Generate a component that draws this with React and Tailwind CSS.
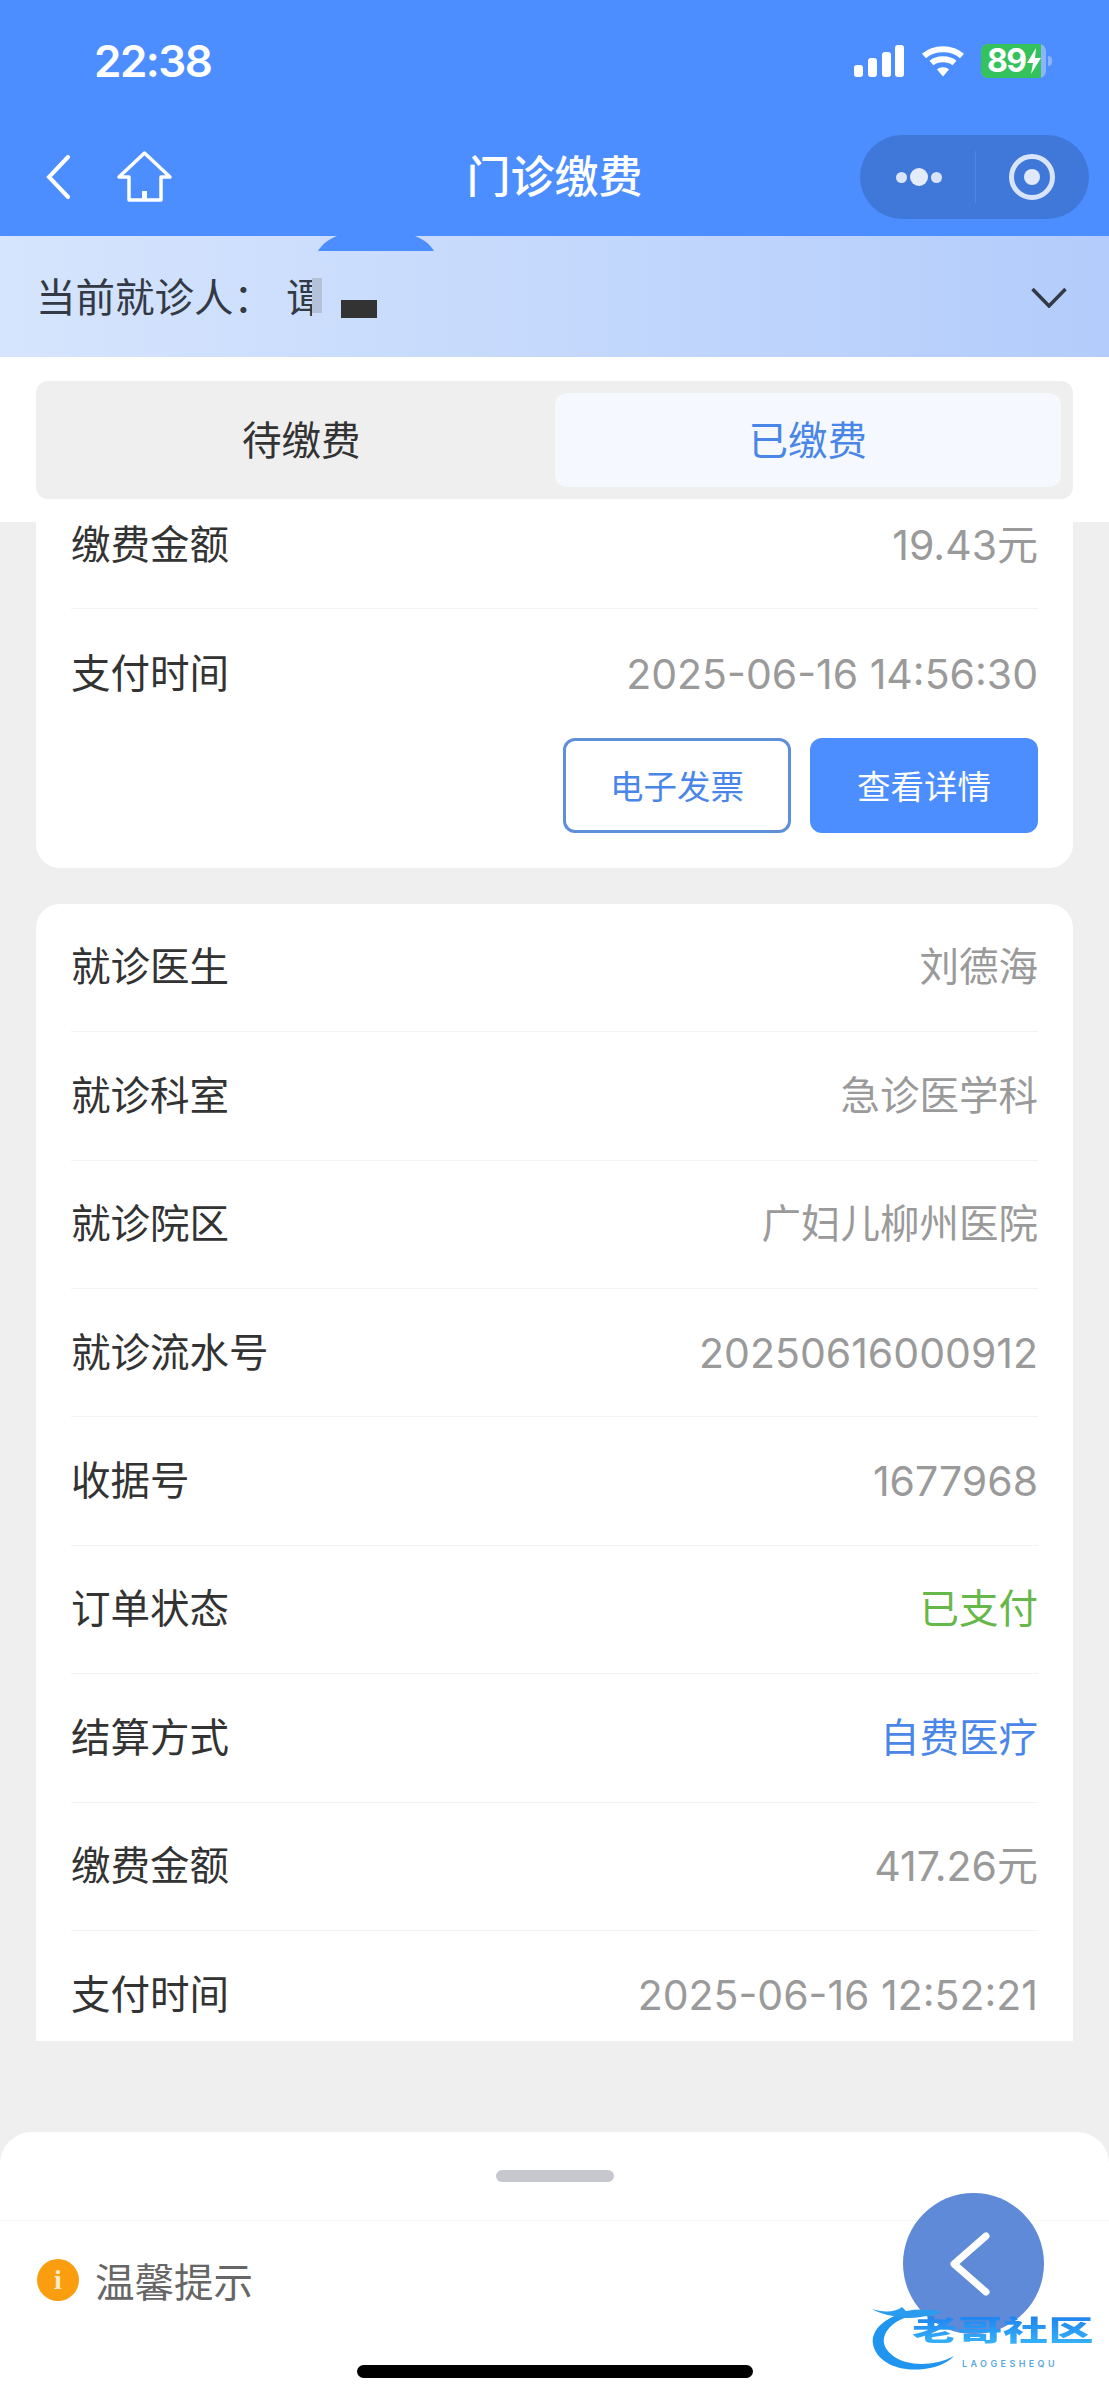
const CJK = '"Noto Sans CJK SC", sans-serif';
const MIX = 'Inter, "Noto Sans CJK SC", sans-serif';

function Row({ label, value, tone = "text-[#9a9a9a] text-[39.5px]", line = true }) {
  return (
    <div className={`flex h-[128.4px] items-center justify-between mx-[35px] ${line ? "border-b border-[#f3f3f3]" : ""}`}>
      <span className="text-[39.5px] leading-[44px] text-[#333333]">{label}</span>
      <span className={`leading-[44px] ${tone}`}>{value}</span>
    </div>
  );
}

const NUM = "text-[#9a9a9a] text-[41px]";

function Signal() {
  return (
    <svg width="50" height="32" viewBox="0 0 50 32" fill="white">
      <rect x="0" y="20" width="9" height="12" rx="3" />
      <rect x="14" y="13" width="9" height="19" rx="3" />
      <rect x="28" y="7" width="9" height="25" rx="3" />
      <rect x="41" y="0" width="9" height="32" rx="3" />
    </svg>
  );
}

function Wifi() {
  return (
    <svg width="44" height="32" viewBox="0 0 44 32" fill="none">
      <path d="M3 11 C13 2 31 2 41 11" stroke="white" strokeWidth="6" strokeLinecap="butt" />
      <path d="M10.5 18 C16 13 28 13 33.500 18" stroke="white" strokeWidth="6" />
      <path d="M16 24.500 C19 21.500 25 21.500 28 24.500 L22 31.500 Z" fill="white" />
    </svg>
  );
}

function Battery() {
  return (
    <div className="flex items-center">
      <div className="flex h-[34px] w-[65px] rounded-[7px] bg-[#8db4fb]">
        <div className="flex h-full w-[60px] items-center rounded-l-[7px] bg-[#33c25c] pl-[6px] text-[32px] font-bold leading-[34px] tracking-[-1.5px] text-white" style={{ fontFamily: "Inter, sans-serif" }}>
          <span>89</span>
          <svg width="14" height="26" viewBox="0 0 14 26" fill="white" className="ml-[1px] shrink-0">
            <path d="M9 0 L0 15 H6 L4 26 L14 10 H8 Z" />
          </svg>
        </div>
      </div>
      <div className="ml-[2px] h-[10px] w-[4px] rounded-r-full bg-[#8db4fb]" />
    </div>
  );
}

function Home() {
  return (
    <svg width="56" height="54" viewBox="0 0 56 54" fill="none" stroke="white" strokeWidth="3.500" strokeLinejoin="round">
      <path d="M27.500 3 L53 27 H44 V50 H12 V27 H2 Z" />
      <rect x="25" y="41" width="5" height="9" fill="white" stroke="none" />
    </svg>
  );
}

function Watermark() {
  return (
    <div className="absolute left-[870px] top-[2302px] h-[74px] w-[230px]">
      <svg width="100" height="74" viewBox="0 0 100 74" fill="none" className="absolute left-0 top-0">
        <path d="M36 10 C14 16 1 28 3 42 C6 60 30 72 60 66 C70 64 78 60 84 54 C70 62 50 64 36 60 C22 56 12 46 14 36 C16 26 26 18 40 14 Z" fill="#2095f0" />
        <path d="M2 7 C14 11 26 10 32 5 L36 9 C48 7 60 7 72 10 C60 14 48 16 34 16 C22 14 10 12 2 7 Z" fill="#2a9cf0" />
      </svg>
      <div className="absolute left-[42px] top-[12px] w-[184px] origin-top scale-y-[0.62] bg-gradient-to-b from-[#1f7fee] to-[#38b4fa] bg-clip-text text-[45px] font-black leading-[50px] tracking-[0.5px] whitespace-nowrap text-transparent" style={{ fontFamily: CJK }}>
        老哥社区
      </div>
      <div className="absolute left-[92px] top-[57px] text-[9px] font-semibold leading-[10px] tracking-[3.4px] whitespace-nowrap text-[#5aa9dd]" style={{ fontFamily: "Inter, sans-serif" }}>
        LAOGESHEQU
      </div>
    </div>
  );
}

export default function App() {
  return (
    <div className="relative flex h-[2400px] w-[1109px] flex-col overflow-hidden bg-[#efefef]" style={{ fontFamily: MIX }}>
      {/* header */}
      <header className="h-[236px] shrink-0 bg-[#4c8dff]">
        <div className="flex h-[122px] items-center justify-between pl-[94px] pr-[57px]">
          <span className="text-[44px] font-semibold tracking-[-1.500px] text-white" style={{ fontFamily: "Inter, sans-serif" }}>22:38</span>
          <div className="flex items-center">
            <Signal />
            <div className="ml-[17px] mr-[16px]"><Wifi /></div>
            <Battery />
          </div>
        </div>
        <div className="grid h-[110px] grid-cols-[1fr_auto_1fr] items-center">
          <div className="flex items-center pl-[46px]">
            <svg width="24" height="46" viewBox="0 0 24 46" fill="none" stroke="white" strokeWidth="4" strokeLinecap="round">
              <path d="M22 3 L3 23 L22 43" />
            </svg>
            <div className="ml-[47px]"><Home /></div>
          </div>
          <div className="mb-[6px] text-[44px] font-medium text-white" style={{ fontFamily: CJK }}>门诊缴费</div>
          <div className="flex justify-end pr-[20px]">
            <div className="flex h-[84px] w-[229px] items-center rounded-full bg-[#3f78d9]">
              <div className="flex w-[115px] items-center justify-center gap-[3px] pl-[2px]">
                <span className="h-[11px] w-[11px] rounded-full bg-[#d9e4f8]" />
                <span className="h-[18px] w-[18px] rounded-full bg-[#e4ecfb]" />
                <span className="h-[11px] w-[11px] rounded-full bg-[#d9e4f8]" />
              </div>
              <div className="h-[52px] w-px bg-[#4f86e2]" />
              <div className="flex flex-1 items-center justify-center pr-[2px]">
                <div className="flex h-[46px] w-[46px] items-center justify-center rounded-full border-[5px] border-[#d9e4f8]">
                  <span className="h-[16px] w-[16px] rounded-full bg-[#e0e8f9]" />
                </div>
              </div>
            </div>
          </div>
        </div>
      </header>

      {/* patient */}
      <div className="relative flex h-[121px] shrink-0 items-center justify-between bg-gradient-to-r from-[#d6e5fd] to-[#b3ccfb] pl-[36px] pr-[42px]">
        <svg width="116" height="15" viewBox="0 0 116 15" className="absolute left-[318px] top-0" fill="#4c8dff">
          <path d="M19 0 H97 C105 3 112 8 116 15 H0 C4 8 11 3 19 0 Z" />
        </svg>
        <div className="mb-[4px] flex h-[39px] items-center text-[39.5px] text-[#333a45]" style={{ fontFamily: CJK }}>
          <span>当前就诊人：</span>
          <span className="relative ml-[13px] whitespace-nowrap">
            谭
            <span className="absolute left-[26px] top-0 h-[60px] w-[14px] bg-[#cddefc]">
              <span className="absolute left-0 top-[13px] h-[35px] w-[10px] bg-[#b3c1d9]" />
            </span>
          </span>
          <span className="ml-[15px] mt-[28px] h-[18px] w-[36px] bg-[#333333]" />
        </div>
        <svg width="36" height="21" viewBox="0 0 36 21" fill="none" stroke="#333a45" strokeWidth="3.500" className="mt-[2px]">
          <path d="M1.500 2 L18 19 L34.500 2" />
        </svg>
      </div>

      {/* tabs */}
      <div className="h-[165px] shrink-0 bg-white px-[36px] pt-[24px]">
        <div className="grid h-[118px] grid-cols-2 rounded-[12px] bg-[#efefef] p-[12px] text-[39.5px]" style={{ fontFamily: CJK }}>
          <div className="flex items-center justify-center pb-[5px] text-[#333333]">待缴费</div>
          <div className="flex items-center justify-center rounded-[12px] bg-[#f5f9ff] pb-[5px] text-[#4a86e8]">已缴费</div>
        </div>
      </div>

      {/* list */}
      <div className="h-[1519px] shrink-0 overflow-hidden px-[36px]">
        <div className="-mt-[41px] rounded-b-[24px] bg-white pb-[35px]">
          <Row label="缴费金额" value="19.43元" tone={NUM} />
          <Row label="支付时间" value="2025-06-16 14:56:30" tone={NUM} line={false} />
          <div className="mr-[35px] flex justify-end gap-[19px] text-[33.5px]" style={{ fontFamily: CJK }}>
            <button className="h-[95px] w-[228px] rounded-[12px] border-[3px] border-[#5f8fd8] text-[#4a86e8]">电子发票</button>
            <button className="h-[95px] w-[228px] rounded-[12px] bg-[#4c8dff] text-white">查看详情</button>
          </div>
        </div>
        <div className="mt-[36px] rounded-t-[24px] bg-white">
          <Row label="就诊医生" value="刘德海" />
          <Row label="就诊科室" value="急诊医学科" />
          <Row label="就诊院区" value="广妇儿柳州医院" />
          <Row label="就诊流水号" value="20250616000912" tone={NUM} />
          <Row label="收据号" value="1677968" tone={NUM} />
          <Row label="订单状态" value="已支付" tone="text-[39.5px] text-[#67b84a]" />
          <Row label="结算方式" value="自费医疗" tone="text-[39.5px] text-[#4a86e8]" />
          <Row label="缴费金额" value="417.26元" tone={NUM} />
          <Row label="支付时间" value="2025-06-16 12:52:21" tone={NUM} line={false} />
        </div>
      </div>

      {/* bottom sheet */}
      <div className="mt-[91px] flex-1 rounded-t-[32px] bg-white">
        <div className="flex h-[89px] justify-center border-b border-[#f5f5f5] pt-[38px]">
          <div className="h-[12px] w-[118px] rounded-full bg-[#c6c7cf]" />
        </div>
        <div className="flex h-[118px] items-center pl-[37px]">
          <div className="flex h-[42px] w-[42px] items-center justify-center rounded-full bg-[#fa9d0e] text-[28px] font-bold leading-none text-[#ffecc4]" style={{ fontFamily: '"Liberation Serif", serif' }}>i</div>
          <span className="ml-[16px] text-[39.5px] text-[#666666]" style={{ fontFamily: CJK }}>温馨提示</span>
        </div>
        <div className="mt-[26px] flex justify-center">
          <div className="h-[13px] w-[396px] rounded-full bg-black" />
        </div>
      </div>

      {/* floating back button */}
      <div className="absolute left-[903px] top-[2193px] flex h-[141px] w-[141px] items-center justify-center rounded-full bg-[#5f8ad8]">
        <svg width="40" height="64" viewBox="0 0 40 64" fill="none" stroke="white" strokeWidth="7" strokeLinecap="round" strokeLinejoin="round" className="-ml-[8px]">
          <path d="M36 4 L4 32 L36 60" />
        </svg>
      </div>

      <Watermark />
    </div>
  );
}
